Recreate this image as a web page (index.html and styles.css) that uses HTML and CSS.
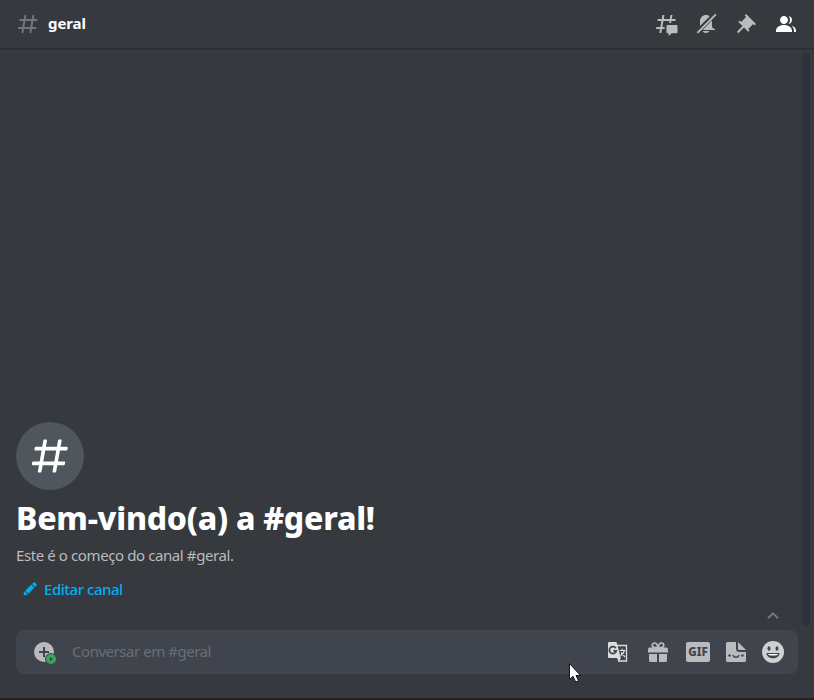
FILE: index.html
```html
<!DOCTYPE html>
<html lang="pt-BR">
<head>
<meta charset="utf-8">
<title>geral</title>
<link rel="stylesheet" href="styles.css">
</head>
<body>
<svg width="0" height="0" class="defs" aria-hidden="true">
  <symbol id="hash" viewBox="0 0 24 24"><path fill="currentColor" fill-rule="evenodd" d="M5.88657 21C5.57547 21 5.3399 20.7189 5.39427 20.4126L6.00001 17H2.59511C2.28449 17 2.04905 16.7198 2.10259 16.4138L2.27759 15.4138C2.31946 15.1746 2.52722 15 2.77011 15H6.35001L7.41001 9H4.00511C3.69449 9 3.45905 8.71977 3.51259 8.41381L3.68759 7.41381C3.72946 7.17456 3.93722 7 4.18011 7H7.76001L8.39677 3.41262C8.43914 3.17391 8.64664 3 8.88907 3H9.87344C10.1845 3 10.4201 3.28107 10.3657 3.58738L9.76001 7H15.76L16.3968 3.41262C16.4391 3.17391 16.6466 3 16.8891 3H17.8734C18.1845 3 18.4201 3.28107 18.3657 3.58738L17.76 7H21.1649C21.4755 7 21.711 7.28023 21.6574 7.58619L21.4824 8.58619C21.4406 8.82544 21.2328 9 20.9899 9H17.41L16.35 15H19.7549C20.0655 15 20.301 15.2802 20.2474 15.5862L20.0724 16.5862C20.0306 16.8254 19.8228 17 19.5799 17H16L15.3632 20.5874C15.3209 20.8261 15.1134 21 14.8709 21H13.8866C13.5755 21 13.3399 20.7189 13.3943 20.4126L14 17H8.00001L7.36325 20.5874C7.32088 20.8261 7.11337 21 6.87094 21H5.88657ZM9.41045 9L8.35045 15H14.3504L15.4104 9H9.41045Z"/></symbol>
</svg>
<div class="app">
  <header class="header">
    <svg class="header-hash" width="24" height="24"><use href="#hash"/></svg>
    <h1 class="title">geral</h1>
    <nav class="toolbar">
      <svg width="24" height="24" viewBox="0 0 24 24" fill="currentColor"><path d="M5.43309 21C5.35842 21 5.30189 20.9325 5.31494 20.859L5.99991 17H2.14274C2.06819 17 2.01168 16.9327 2.02453 16.8593L2.33253 15.0993C2.34258 15.0419 2.39244 15 2.45074 15H6.34991L7.40991 9H3.55274C3.47819 9 3.42168 8.93274 3.43453 8.85931L3.74253 7.09931C3.75258 7.04189 3.80244 7 3.86074 7H7.75991L8.45234 3.09903C8.46251 3.04174 8.51231 3 8.57049 3H10.3267C10.4014 3 10.4579 3.06746 10.4449 3.14097L9.75991 7H15.7599L16.4523 3.09903C16.4625 3.04174 16.5123 3 16.5705 3H18.3267C18.4014 3 18.4579 3.06746 18.4449 3.14097L17.7599 7H21.6171C21.6916 7 21.7481 7.06725 21.7353 7.14069L21.4273 8.90069C21.4172 8.95811 21.3674 9 21.3091 9H17.4099L17.0495 11.04H15.05L15.4104 9H9.41035L8.35035 15H10.5599V17H7.99991L7.30749 20.901C7.29732 20.9583 7.24752 21 7.18934 21H5.43309Z"/><path d="M13.4399 12.96C12.9097 12.96 12.4799 13.3898 12.4799 13.92V20.2213C12.4799 20.7515 12.9097 21.1813 13.4399 21.1813H14.3999C14.5325 21.1813 14.6399 21.2887 14.6399 21.4213V23.4597C14.6399 23.6677 14.8865 23.7773 15.0408 23.6378L17.4858 21.4289C17.6622 21.2695 17.8916 21.1813 18.1294 21.1813H22.5599C23.0901 21.1813 23.5199 20.7515 23.5199 20.2213V13.92C23.5199 13.3898 23.0901 12.96 22.5599 12.96H13.4399Z"/></svg>
      <svg width="24" height="24" viewBox="0 0 24 24" fill="currentColor"><mask id="cut"><path fill="#fff" d="M0 0h24v24H0z"/><path stroke="#000" stroke-width="4.600" d="M1 22.3 23.3 0"/></mask><path mask="url(#cut)" d="M18 9V14C18 15.657 19.344 17 21 17V18H3V17C4.656 17 6 15.657 6 14V9C6 5.686 8.686 3 12 3C15.314 3 18 5.686 18 9ZM12 21C10.524 21 9.248 20.19 8.555 19H15.445C14.752 20.19 13.476 21 12 21Z"/><path d="M21.178 1.707 22.592 3.121 4.12 21.593 2.706 20.179Z"/></svg>
      <svg width="24" height="24" viewBox="0 0 24 24" fill="currentColor"><path d="M22 12L12.101 2.10101L10.686 3.51401L12.101 4.92901L7.15096 9.87801V9.88001L5.73596 8.46501L4.32196 9.88001L8.56496 14.122L2.90796 19.778L4.32196 21.192L9.97896 15.536L14.222 19.778L15.636 18.364L14.222 16.95L19.171 12H19.172L20.586 13.414L22 12Z"/></svg>
      <svg class="active" width="24" height="24" viewBox="0 0 24 24" fill="currentColor"><path d="M14 8.006C14 10.211 12.206 12.006 10 12.006C7.795 12.006 6 10.211 6 8.006C6 5.801 7.794 4.006 10 4.006C12.206 4.006 14 5.801 14 8.006ZM2 19.006C2 15.473 5.29 13.006 10 13.006C14.711 13.006 18 15.473 18 19.006V20.006H2V19.006Z"/><path d="M20 20.006H22V19.006C22 16.443 20.27 14.442 17.521 13.535C19.062 14.913 20 16.806 20 19.006V20.006ZM14.883 11.908C16.666 11.504 18 9.908 18 8.006C18 5.969 16.469 4.282 14.497 4.037C15.432 5.095 16 6.485 16 8.006C16 9.449 15.489 10.774 14.638 11.81Z"/></svg>
    </nav>
  </header>
  <main class="messages">
    <section class="welcome">
      <div class="badge"><svg width="44" height="44"><use href="#hash"/></svg></div>
      <h2 class="welcome-title">Bem-vindo(a) a #geral!</h2>
      <p class="welcome-text">Este é o começo do canal #geral.</p>
      <a class="edit"><svg width="16" height="16" viewBox="0 0 16 16" fill="currentColor"><path d="M9.300 3.900 12.100 6.700 6.300 12.500 3.500 9.700ZM10.200 3 11.400 1.900a1.200 1.200 0 0 1 1.700 0L14.100 2.900a1.200 1.200 0 0 1 0 1.700L13 5.800ZM2.800 10.600 5.400 13.200 4.400 13.900 2 14 2.100 11.600Z" stroke="currentColor" stroke-width=".5"/></svg><span>Editar canal</span></a>
    </section>
    <div class="scrollbar"></div>
    <svg class="chevron" width="14" height="10" viewBox="0 0 14 10"><path d="M2 8.300 7 3.300l5 5" fill="none" stroke="currentColor" stroke-width="2"/></svg>
  </main>
  <footer class="composer">
    <div class="input">
      <svg class="attach" width="24" height="24" viewBox="0 0 24 24"><mask id="dot"><path fill="#fff" d="M0 0h24v24H0z"/><circle cx="18" cy="19" r="6"/></mask><path mask="url(#dot)" fill="#b9bbbe" fill-rule="evenodd" d="M11 2a10 10 0 1 0 0 20a10 10 0 0 0 0-20ZM16 13h-4v4h-2v-4H6v-2h4V7h2v4h4Z"/><circle cx="18" cy="19" r="5" fill="#3ba55d"/><path d="m17 17 2.500 2-2.500 2Z" fill="#36393f"/></svg>
      <span class="placeholder">Conversar em #geral</span>
      <div class="tools">
        <svg width="24" height="24" viewBox="0 0 24 24"><path d="M11 5.500h9.500v15.500H12" fill="none" stroke="#dcddde" stroke-width="1.300"/><path fill="#dcddde" d="M3 2h7.500l4.300 16H3a1 1 0 0 1-1-1V3a1 1 0 0 1 1-1ZM11 18h4l-2.500 3.500Z"/><path d="M9.800 8.200a3.500 3.500 0 1 0 .5 2.600H7.300" fill="none" stroke="#41444b" stroke-width="1.700"/><path d="M13.500 10.500H19.500M16.200 8.800v1.500M18.500 10.500c-.7 2.500-2.500 4-4 5.200M15 12.500l4 4.500" fill="none" stroke="#dcddde" stroke-width="1.200"/></svg>
        <svg width="24" height="24" viewBox="0 0 24 24"><path fill="#b9bbbe" d="M3 14h8v8H4.500A1.500 1.500 0 0 1 3 20.500ZM13 14h8v6.500a1.500 1.500 0 0 1-1.500 1.500H13ZM3.500 7.500h17A1.500 1.500 0 0 1 22 9V12.500H2V9A1.500 1.500 0 0 1 3.500 7.500Z"/><path d="M11.800 7.500C11.500 4.500 10 3 8.300 3a2 2 0 0 0-2 2.200c0 1.300 1 2.300 2.500 2.300ZM12.200 7.500C12.500 4.500 14 3 15.700 3a2 2 0 0 1 2 2.200c0 1.300-1 2.300-2.500 2.300Z" fill="none" stroke="#b9bbbe" stroke-width="1.700"/></svg>
        <span class="gif">GIF</span>
        <svg class="sticker" width="24" height="24" viewBox="0 0 24 24"><path fill="#b9bbbe" d="M3.500 2H12v6.500A3.500 3.500 0 0 0 15.500 12H22v8.500a1.500 1.500 0 0 1-1.500 1.500h-17A1.500 1.500 0 0 1 2 20.500v-17A1.500 1.500 0 0 1 3.500 2ZM14 2l8 8h-6.500A1.500 1.500 0 0 1 14 8.500Z"/><g fill="#41444b"><circle cx="5.500" cy="15.500" r="1.200"/><circle cx="18.500" cy="15.500" r="1.200"/></g><path d="M9 15c.5 3 5.500 3 6 0" fill="none" stroke="#41444b" stroke-width="1.500"/></svg>
        <svg class="emoji" width="22" height="22" viewBox="0 0 22 22"><circle cx="11" cy="11" r="11" fill="#d0d1d3"/><g fill="#41444b"><ellipse cx="7" cy="7.500" rx="1.500" ry="2.200"/><ellipse cx="15" cy="7.500" rx="1.500" ry="2.200"/><path d="M4.500 12h13c0 7-13 7-13 0Z"/></g><path fill="#fff" d="M6 13h10c0 2-10 2-10 0Z"/></svg>
      </div>
    </div>
  </footer>
  <svg class="cursor" width="14" height="22" viewBox="0 0 14 22"><path d="M1.500 1.500v16l3.500-3.300L7.700 20l2.800-1.200L8 13.500h4.500Z" fill="#fff" stroke="#101425"/></svg>
</div>
</body>
</html>
```
FILE: styles.css
```css
* { box-sizing: border-box; margin: 0; }
body { background: #36393e; color: #fff; font-family: "Noto Sans", sans-serif; }
svg { display: block; flex: none; }
.defs { position: absolute; }
.app { position: relative; height: 700px; display: flex; flex-direction: column; border-bottom: 2px solid #241f20; overflow: hidden; }
.header { height: 49px; flex: none; display: flex; align-items: center; padding: 0 16px; border-bottom: 1px solid #2a2c31; box-shadow: 0 1px 0 #303338; }
.header-hash { color: #72767d; }
.title { margin: 0 0 2px 8px; font-size: 15px; line-height: 20px; font-weight: 700; letter-spacing: -0.1px; }
.toolbar { display: flex; gap: 16px; margin-left: auto; color: #b9bbbe; }
.active { color: #fff; }
.messages { position: relative; flex: 1; display: flex; align-items: flex-end; }
.welcome { padding: 0 16px 31px; }
.badge { width: 68px; height: 68px; border-radius: 50%; background: #4f565e; display: flex; align-items: center; justify-content: center; }
.welcome-title { margin-top: 8px; font-size: 32px; line-height: 40px; font-weight: 800; white-space: nowrap; letter-spacing: -0.25px; }
.welcome-text { margin-top: 7px; color: #b9bbbe; font-size: 15px; line-height: 20px; letter-spacing: -0.4px; white-space: nowrap; }
.edit { display: flex; align-items: center; gap: 6px; margin: 14px 0 0 6px; color: #00aff4; font-size: 15px; line-height: 20px; font-weight: 500; letter-spacing: -0.47px; }
.scrollbar { position: absolute; right: 4px; top: 3px; bottom: 4px; width: 8px; border-radius: 4px; background: #2e323b; }
.chevron { position: absolute; left: 766px; bottom: 10px; color: #72767d; }
.composer { flex: none; padding: 0 16px 24px; }
.input { height: 44px; border-radius: 8px; background: #40444d; display: flex; align-items: center; padding: 0 14px 0 17px; }
.placeholder { margin: 0 0 2px 15px; color: #6a6e76; font-size: 15px; line-height: 20px; letter-spacing: -0.46px; }
.tools { margin-left: auto; display: flex; align-items: center; gap: 16px; }
.gif { width: 24px; height: 20px; border-radius: 2px; background: #b9bbbe; color: #40444b; font-size: 11.5px; line-height: 20px; font-weight: 800; text-align: center; }
.sticker { margin-left: -2px; }
.emoji { margin-left: -2px; }
.cursor { position: absolute; left: 568px; top: 662px; }
```
